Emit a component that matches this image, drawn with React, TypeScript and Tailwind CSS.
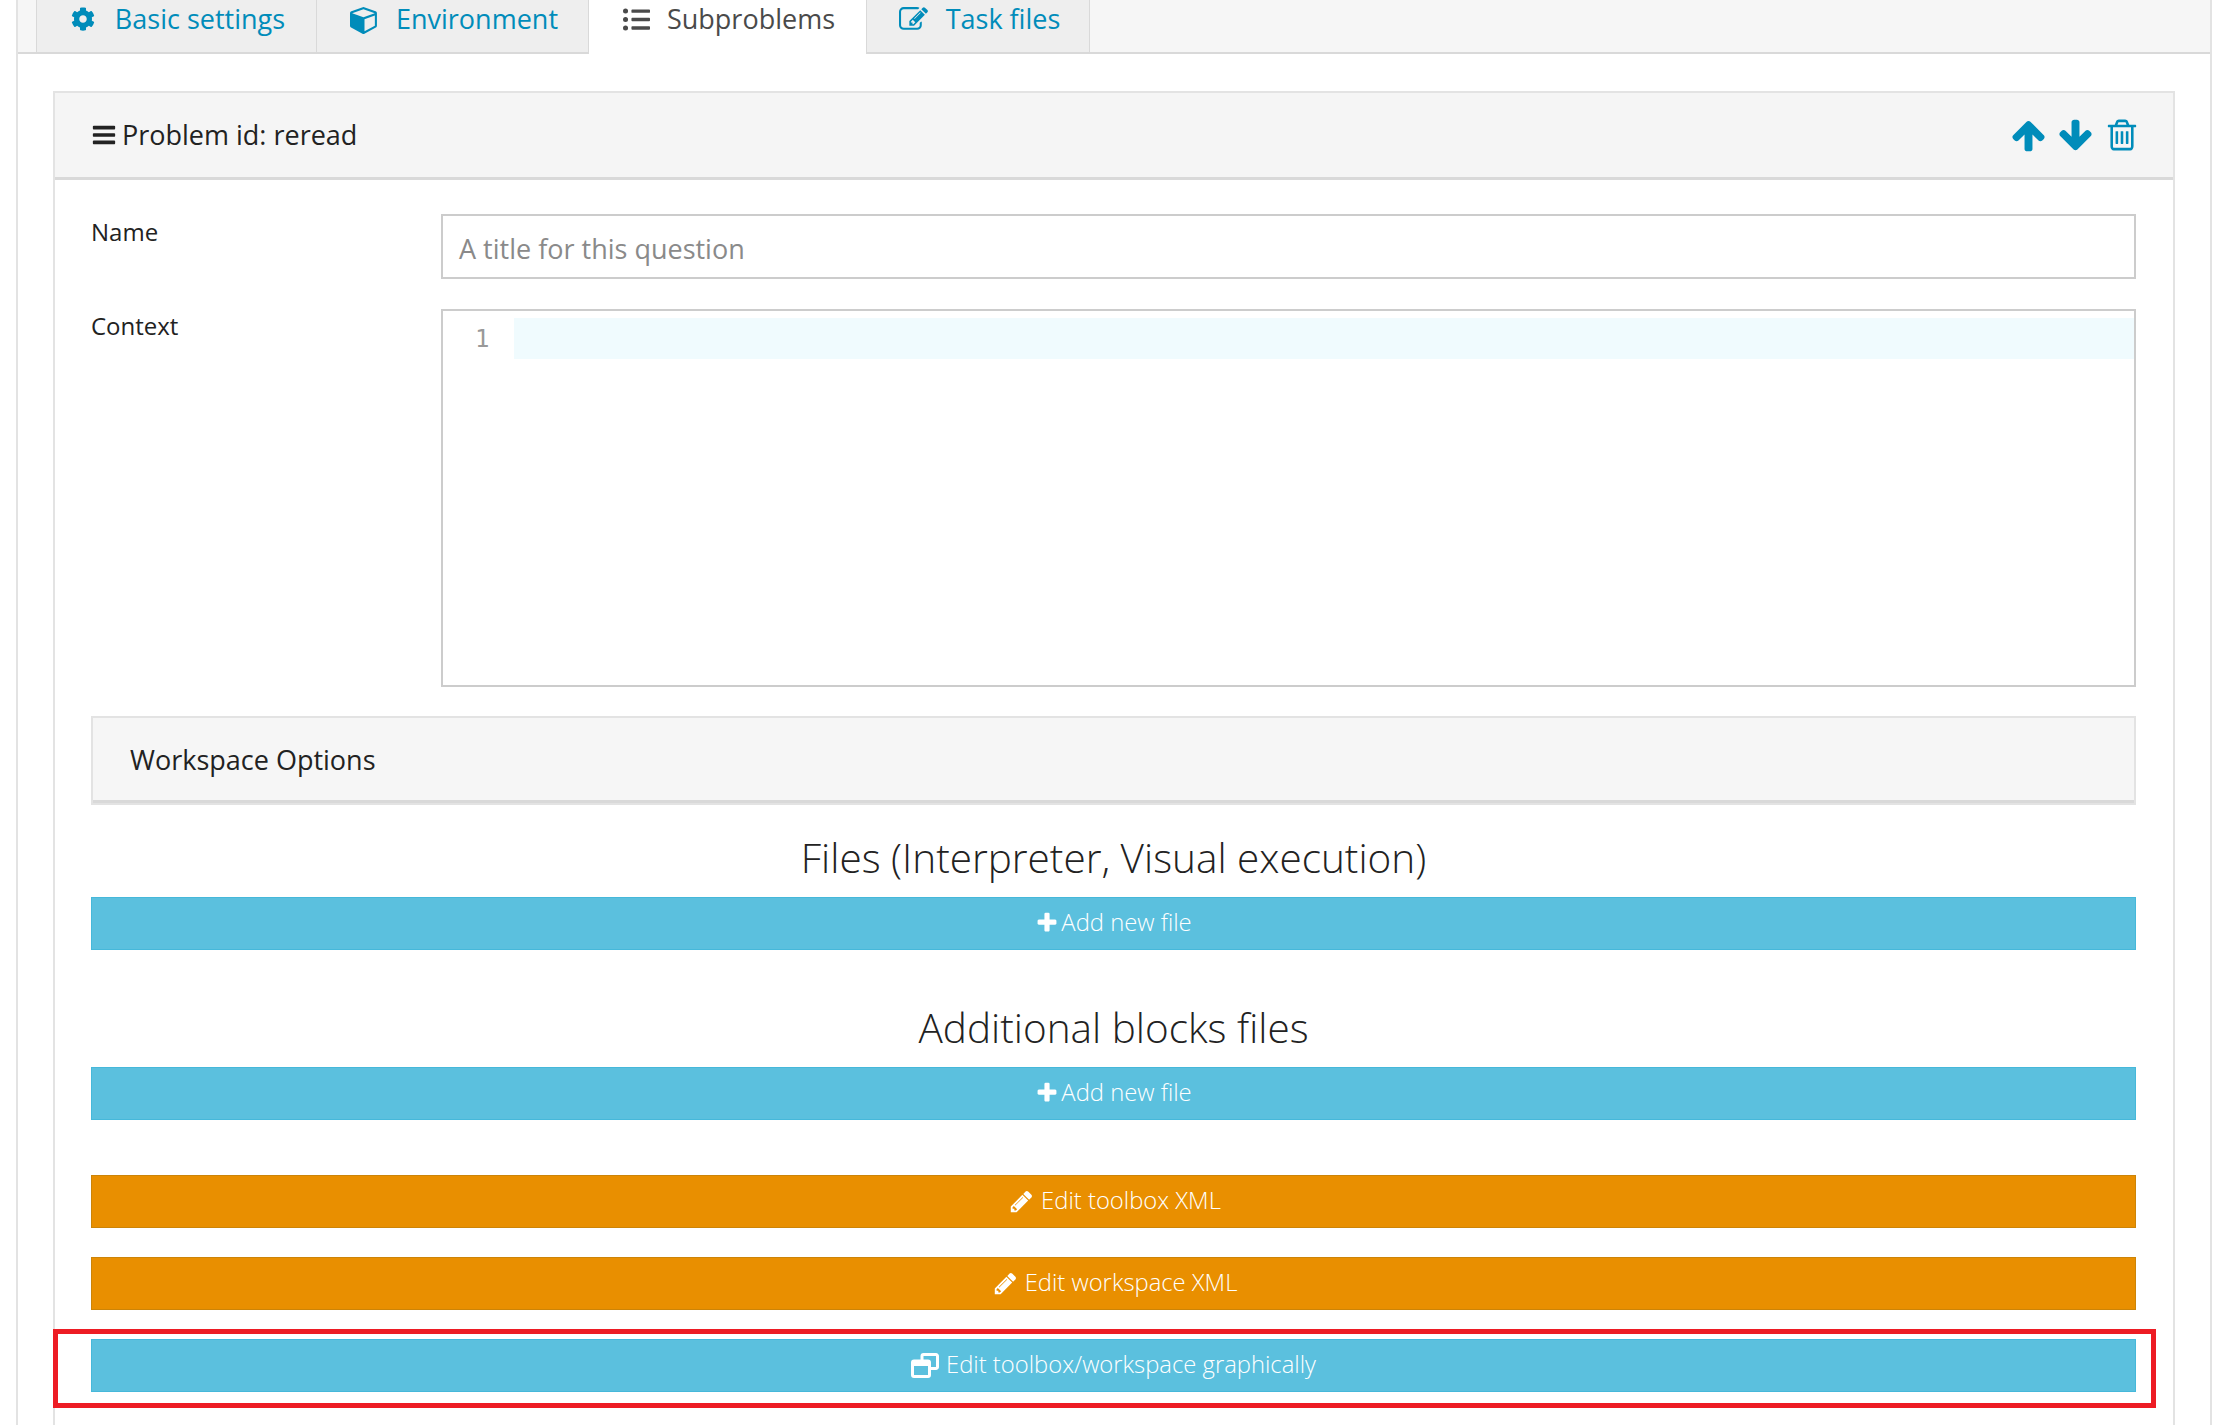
import { FaCog, FaListUl } from 'react-icons/fa';
import type { ReactNode } from 'react';

const paths = {
  cube: 'M896 1629l640-349v-636l-640 233v752zm-64-865l698-254-698-254-698 254zm832-252v768q0 35-18 65t-49 47l-704 384q-28 16-61 16t-61-16l-704-384q-31-17-49-47t-18-65v-768q0-40 23-73t61-47l704-256q22-8 44-8t44 8l704 256q38 14 61 47t23 73z',
  edit: 'M888 1184l116-116-152-152-116 116v56h96v96h56zm440-720q-16-16-33 1l-350 350q-17 17-1 33t33-1l350-350q17-17 1-33zm80 594v190q0 119-84.5 203.5t-203.5 84.5h-832q-119 0-203.5-84.5t-84.5-203.5v-832q0-119 84.5-203.5t203.5-84.5h832q63 0 117 25 15 7 18 23 3 17-9 29l-49 49q-14 14-32 8-23-6-45-6h-832q-66 0-113 47t-47 113v832q0 66 47 113t113 47h832q66 0 113-47t47-113v-126q0-13 9-22l64-64q15-15 35-7t20 29zm-96-738l288 288-672 672h-288v-288zm444 132l-92 92-288-288 92-92q28-28 68-28t68 28l152 152q28 28 28 68t-28 68z',
  bars: 'M1664 1344v128q0 26-19 45t-45 19h-1408q-26 0-45-19t-19-45v-128q0-26 19-45t45-19h1408q26 0 45 19t19 45zm0-512v128q0 26-19 45t-45 19h-1408q-26 0-45-19t-19-45v-128q0-26 19-45t45-19h1408q26 0 45 19t19 45zm0-512v128q0 26-19 45t-45 19h-1408q-26 0-45-19t-19-45v-128q0-26 19-45t45-19h1408q26 0 45 19t19 45z',
  up: 'M1675 971q0 51-37 90l-75 75q-38 38-91 38-54 0-90-38l-294-293v704q0 52-37.5 84.5t-90.5 32.5h-128q-53 0-90.5-32.5t-37.5-84.5v-704l-294 293q-36 38-90 38t-90-38l-75-75q-38-38-38-90 0-53 38-91l651-651q35-37 90-37 54 0 91 37l651 651q37 39 37 91z',
  down: 'M1675 832q0 53-37 90l-651 652q-39 37-91 37-53 0-90-37l-651-652q-38-36-38-90 0-53 38-91l74-75q39-37 91-37 53 0 90 37l294 294v-704q0-52 38-90t90-38h128q52 0 90 38t38 90v704l294-294q37-37 90-37 52 0 91 37l75 75q37 39 37 91z',
  trash: 'M704 736v576q0 14-9 23t-23 9h-64q-14 0-23-9t-9-23v-576q0-14 9-23t23-9h64q14 0 23 9t9 23zm256 0v576q0 14-9 23t-23 9h-64q-14 0-23-9t-9-23v-576q0-14 9-23t23-9h64q14 0 23 9t9 23zm256 0v576q0 14-9 23t-23 9h-64q-14 0-23-9t-9-23v-576q0-14 9-23t23-9h64q14 0 23 9t9 23zm128 724v-948h-896v948q0 22 7 40.5t14.5 27 10.5 8.5h832q3 0 10.5-8.5t14.5-27 7-40.5zm-672-1076h448l-48-117q-7-9-17-11h-317q-10 2-17 11zm928 32v64q0 14-9 23t-23 9h-96v948q0 83-47 143.5t-113 60.5h-832q-66 0-113-58.5t-47-141.5v-952h-96q-14 0-23-9t-9-23v-64q0-14 9-23t23-9h309l70-167q15-37 54-63t79-26h320q40 0 79 26t54 63l70 167h309q14 0 23 9t9 23z',
  plus: 'M1600 736v192q0 40-28 68t-68 28h-416v416q0 40-28 68t-68 28h-192q-40 0-68-28t-28-68v-416h-416q-40 0-68-28t-28-68v-192q0-40 28-68t68-28h416v-416q0-40 28-68t68-28h192q40 0 68 28t28 68v416h416q40 0 68 28t28 68z',
  pencil: 'M491 1536l91-91-235-235-91 91v107h128v128h107zm523-928q0-22-22-22-10 0-17 7l-542 542q-7 7-7 17 0 22 22 22 10 0 17-7l542-542q7-7 7-17zm-54-192l416 416-832 832h-416v-416zm683 96q0 53-37 90l-166 166-416-416 166-165q36-38 90-38 53 0 91 38l235 234q37 39 37 91z',
};

const Icon = ({ name, className }: { name: keyof typeof paths; className: string }) => (
  <svg viewBox="0 0 1792 1792" className={className} fill="currentColor">
    <path d={paths[name]} />
  </svg>
);

const RestoreIcon = () => (
  <svg viewBox="0 0 28 25" className="w-[28px] h-[25px]" fill="none" stroke="currentColor" strokeWidth="3">
    <path d="M11 7 V3 a1.5 1.5 0 0 1 1.5 -1.5 H25 a1.5 1.5 0 0 1 1.5 1.5 V14 a1.5 1.5 0 0 1 -1.5 1.5 H20" />
    <rect x="1.5" y="8" width="17" height="15.5" rx="1.5" />
    <rect x="3" y="9" width="14" height="4" fill="currentColor" stroke="none" />
  </svg>
);

const Tab = ({ icon, label, width, active }: { icon: ReactNode; label: string; width: string; active?: boolean }) => (
  <div
    className={`flex items-center justify-center pl-[3px] border-r border-[#d9d9d9] text-[27px] ${width} ${
      active ? 'h-[54px] pb-[16px] bg-white text-[#4a4a4a]' : 'h-[52px] pb-[14px] bg-[#eeeeee] text-[#008cba]'
    }`}
  >
    {icon}
    <span>{label}</span>
  </div>
);

const ActionButton = ({ icon, label, color }: { icon: ReactNode; label: string; color: 'info' | 'warning' }) => (
  <div
    className={`flex items-center justify-center h-[53px] pb-[1px] border text-white font-light text-[23.8px] ${
      color === 'info' ? 'bg-[#5bc0de] border-[#46b8da]' : 'pl-[3px] bg-[#e98f00] border-[#cc8408]'
    }`}
  >
    {icon}
    <span>{label}</span>
  </div>
);

export default function App() {
  return (
    <div className="w-[2221px] h-[1425px] overflow-hidden bg-white text-[#222222] font-['Open_Sans',sans-serif]">
      <div className="ml-[16px] w-[2196px] h-full border-x-2 border-[#e3e3e3]">
        <div className="flex h-[54px] bg-[#f6f6f6] border-b-2 border-[#d9d9d9] pl-[18px]">
          <div className="flex items-start h-[54px] border-l border-[#d9d9d9]">
            <Tab width="w-[280px]" icon={<FaCog className="text-[24px] mr-[20px]" />} label="Basic settings" />
            <Tab width="w-[272px]" icon={<Icon name="cube" className="w-[29px] h-[29px] mr-[17px]" />} label="Environment" />
            <Tab width="w-[278px]" active icon={<FaListUl className="text-[27px] mr-[17px]" />} label="Subproblems" />
            <Tab width="w-[223px]" icon={<Icon name="edit" className="w-[29px] h-[29px] mr-[18px]" />} label="Task files" />
          </div>
        </div>

        <div className="mx-[35px] mt-[37px] border-x-2 border-t-2 border-[#e3e3e3] h-[1400px]">
          <div className="flex items-center justify-between h-[87px] bg-[#f5f5f5] border-b-[3px] border-[#d9d9d9] pl-[36px] pr-[33px]">
            <div className="flex items-center text-[27px]">
              <Icon name="bars" className="w-[26px] h-[26px] mr-[5px]" />
              <span>Problem id: reread</span>
            </div>
            <div className="flex items-center gap-[10px] text-[#008cba]">
              <Icon name="up" className="w-[37px] h-[37px]" />
              <Icon name="down" className="w-[37px] h-[37px]" />
              <Icon name="trash" className="w-[36px] h-[36px]" />
            </div>
          </div>

          <div className="pl-[36px] pr-[37px] pt-[34px]">
            <div className="grid grid-cols-[350px_1fr] gap-y-[30px] text-[24px]">
              <div>Name</div>
              <div className="flex items-center h-[65px] pl-[16px] pt-[5px] border-2 border-[#cccccc] text-[27px] text-[#8a8a8a]">
                A title for this question
              </div>
              <div className="-mt-[1px]">Context</div>
              <div className="flex items-start h-[378px] pt-[7px] border-2 border-[#cccccc] font-['DejaVu_Sans_Mono',monospace]">
                <div className="w-[71px] h-[41px] pl-[32px] pt-[3px] text-[24px] leading-[36px] text-[#999999]">1</div>
                <div className="grow h-[41px] bg-[#f0fbfe]" />
              </div>
            </div>

            <div className="flex items-center h-[89px] mt-[29px] pl-[37px] border-2 border-[#e3e3e3] bg-[#f6f6f6] text-[27px] shadow-[inset_0_-3px_0_#d9d9d9]">
              Workspace Options
            </div>

            <h3 className="h-[92px] pt-[23px] text-center font-light text-[40.5px] leading-[60px]">Files (Interpreter, Visual execution)</h3>
            <ActionButton color="info" icon={<Icon name="plus" className="w-[24px] h-[24px] mr-[2px]" />} label="Add new file" />

            <h3 className="h-[117px] pt-[48px] text-center font-light text-[40.5px] leading-[60px]">Additional blocks files</h3>
            <ActionButton color="info" icon={<Icon name="plus" className="w-[24px] h-[24px] mr-[2px]" />} label="Add new file" />

            <div className="mt-[55px] flex flex-col gap-[29px]">
              <ActionButton color="warning" icon={<Icon name="pencil" className="w-[25px] h-[25px] mr-[7px]" />} label="Edit toolbox XML" />
              <ActionButton color="warning" icon={<Icon name="pencil" className="w-[25px] h-[25px] mr-[7px]" />} label="Edit workspace XML" />
              <div className="relative">
                <ActionButton color="info" icon={<span className="mr-[7px]"><RestoreIcon /></span>} label="Edit toolbox/workspace graphically" />
                <div className="absolute -left-[38px] -right-[20px] -top-[10px] -bottom-[16px] border-[5px] border-[#ed1c24]" />
              </div>
            </div>
          </div>
        </div>
      </div>
    </div>
  );
}
